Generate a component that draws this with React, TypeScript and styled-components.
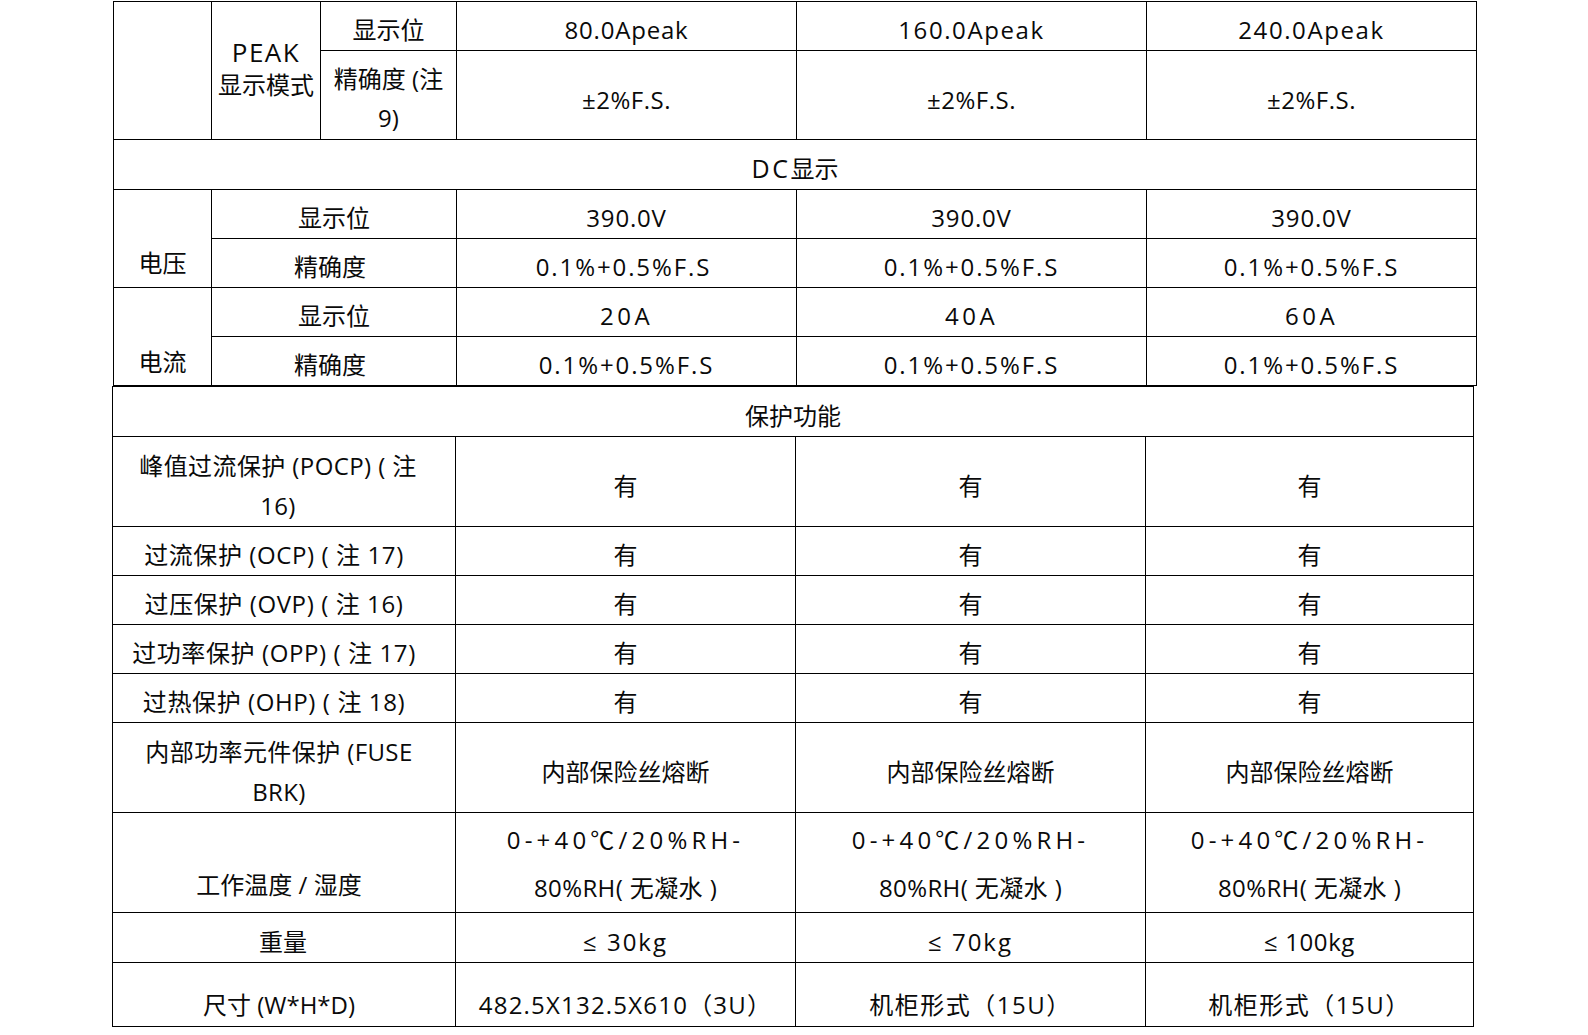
import styled, { createGlobalStyle } from 'styled-components';

const GlobalStyle = createGlobalStyle`
  html, body {
    margin: 0;
    padding: 0;
    background: #ffffff;
  }
  body {
    font-family: "Open Sans", "Noto Sans CJK SC", sans-serif;
    color: #0a0a0a;
  }
`;

const Page = styled.div`
  width: 1588px;
  padding-top: 1px;
  display: flex;
  flex-direction: column;
`;

const Table = styled.table<{ $left: number; $width: number }>`
  border-collapse: collapse;
  table-layout: fixed;
  width: ${({ $width }) => $width}px;
  margin-left: ${({ $left }) => $left}px;
`;

const Col = styled.col<{ $w: number }>`
  width: ${({ $w }) => $w}px;
`;

const Row = styled.tr<{ $h: number }>`
  height: ${({ $h }) => $h}px;
`;

// $shift moves the text off the middle (down when positive), $bottom sits it on the cell bottom
const Cell = styled.td<{
  $lh?: number;
  $ls?: number;
  $shift?: number;
  $bottom?: number;
  $pr?: number;
}>`
  border: 1px solid #000;
  padding-left: 4px;
  padding-right: ${({ $pr }) => $pr ?? 4}px;
  padding-top: ${({ $shift, $bottom }) =>
    $bottom === undefined ? Math.max(0, ($shift ?? 4) * 2) : 0}px;
  padding-bottom: ${({ $shift, $bottom }) =>
    $bottom === undefined ? Math.max(0, -($shift ?? 4) * 2) : $bottom}px;
  vertical-align: ${({ $bottom }) => ($bottom === undefined ? 'middle' : 'bottom')};
  text-align: center;
  font-size: 24px;
  line-height: ${({ $lh }) => $lh ?? 40}px;
  letter-spacing: ${({ $ls }) => $ls ?? 0}px;
  white-space: nowrap;
`;

const Spaced = styled.span<{ $ls: number; $size?: number }>`
  letter-spacing: ${({ $ls }) => $ls}px;
  font-size: ${({ $size }) => $size ?? 24}px;
`;

const TopTable = () => (
  <Table $left={113} $width={1363}>
    <colgroup>
      <Col $w={98} />
      <Col $w={109} />
      <Col $w={136} />
      <Col $w={340} />
      <Col $w={350} />
      <Col $w={330} />
    </colgroup>
    <tbody>
      <Row $h={49}>
        <Cell rowSpan={2} />
        <Cell rowSpan={2} $lh={32} $shift={-2}>
          <Spaced $ls={1.5} $size={26}>PEAK</Spaced>
          <br />
          显示模式
        </Cell>
        <Cell>显示位</Cell>
        <Cell $ls={0.8}>80.0Apeak</Cell>
        <Cell $ls={1.6}>160.0Apeak</Cell>
        <Cell $ls={1.6}>240.0Apeak</Cell>
      </Row>
      <Row $h={89}>
        <Cell $lh={39} $shift={3}>
          精确度 (注
          <br />
          9)
        </Cell>
        <Cell $ls={0.5} $shift={5}>±2%F.S.</Cell>
        <Cell $ls={0.5} $shift={5}>±2%F.S.</Cell>
        <Cell $ls={0.5} $shift={5}>±2%F.S.</Cell>
      </Row>
      <Row $h={49}>
        <Cell colSpan={6}>
          <Spaced $ls={2.5} $size={25}>DC</Spaced>显示
        </Cell>
      </Row>
      <Row $h={49}>
        <Cell rowSpan={2} $bottom={4}>电压</Cell>
        <Cell colSpan={2}>显示位</Cell>
        <Cell $ls={0.8}>390.0V</Cell>
        <Cell $ls={0.8}>390.0V</Cell>
        <Cell $ls={0.8}>390.0V</Cell>
      </Row>
      <Row $h={49}>
        <Cell colSpan={2} $pr={12}>精确度</Cell>
        <Cell $ls={1.9} $pr={10}>0.1%+0.5%F.S</Cell>
        <Cell $ls={1.9}>0.1%+0.5%F.S</Cell>
        <Cell $ls={1.9}>0.1%+0.5%F.S</Cell>
      </Row>
      <Row $h={49}>
        <Cell rowSpan={2} $bottom={3}>电流</Cell>
        <Cell colSpan={2}>显示位</Cell>
        <Cell $ls={3.5}>20A</Cell>
        <Cell $ls={3.5}>40A</Cell>
        <Cell $ls={3.5}>60A</Cell>
      </Row>
      <Row $h={49}>
        <Cell colSpan={2} $pr={12}>精确度</Cell>
        <Cell $ls={1.9}>0.1%+0.5%F.S</Cell>
        <Cell $ls={1.9}>0.1%+0.5%F.S</Cell>
        <Cell $ls={1.9}>0.1%+0.5%F.S</Cell>
      </Row>
    </tbody>
  </Table>
);

const protections = [
  '过流保护 (OCP) ( 注 17)',
  '过压保护 (OVP) ( 注 16)',
  '过功率保护 (OPP) ( 注 17)',
  '过热保护 (OHP) ( 注 18)',
];

const ProtectionTable = () => (
  <Table $left={112} $width={1361}>
    <colgroup>
      <Col $w={343} />
      <Col $w={340} />
      <Col $w={350} />
      <Col $w={328} />
    </colgroup>
    <tbody>
      <Row $h={50}>
        <Cell colSpan={4}>保护功能</Cell>
      </Row>
      <Row $h={90}>
        <Cell $ls={0.4} $pr={16}>
          峰值过流保护 (POCP) ( 注
          <br />
          16)
        </Cell>
        <Cell>有</Cell>
        <Cell>有</Cell>
        <Cell>有</Cell>
      </Row>
      {protections.map((label) => (
        <Row $h={49} key={label}>
          <Cell $ls={0.6} $pr={24}>
            {label}
          </Cell>
          <Cell>有</Cell>
          <Cell>有</Cell>
          <Cell>有</Cell>
        </Row>
      ))}
      <Row $h={90}>
        <Cell $ls={0.4} $pr={14}>
          内部功率元件保护 (FUSE
          <br />
          BRK)
        </Cell>
        <Cell>内部保险丝熔断</Cell>
        <Cell>内部保险丝熔断</Cell>
        <Cell>内部保险丝熔断</Cell>
      </Row>
      <Row $h={100}>
        <Cell $bottom={7} $pr={14}>
          工作温度 / 湿度
        </Cell>
        {[0, 1, 2].map((i) => (
          <Cell key={i} $lh={48} $shift={1}>
            <Spaced $ls={4.2}>0-+40℃/20%RH-</Spaced>
            <br />
            <Spaced $ls={0.4}>80%RH( 无凝水 )</Spaced>
          </Cell>
        ))}
      </Row>
      <Row $h={50}>
        <Cell $shift={4.5} $pr={6}>
          重量
        </Cell>
        <Cell $ls={2} $shift={4.5}>≤ 30kg</Cell>
        <Cell $ls={2} $shift={4.5}>≤ 70kg</Cell>
        <Cell $ls={0.6} $shift={4.5}>≤ 100kg</Cell>
      </Row>
      <Row $h={64}>
        <Cell $bottom={1} $pr={14}>
          尺寸 (W*H*D)
        </Cell>
        <Cell $bottom={1} $ls={1.2}>482.5X132.5X610（3U）</Cell>
        <Cell $bottom={1} $ls={1.5}>机柜形式（15U）</Cell>
        <Cell $bottom={1} $ls={1.5}>机柜形式（15U）</Cell>
      </Row>
    </tbody>
  </Table>
);

export default function App() {
  return (
    <>
      <GlobalStyle />
      <Page>
        <TopTable />
        <ProtectionTable />
      </Page>
    </>
  );
}
